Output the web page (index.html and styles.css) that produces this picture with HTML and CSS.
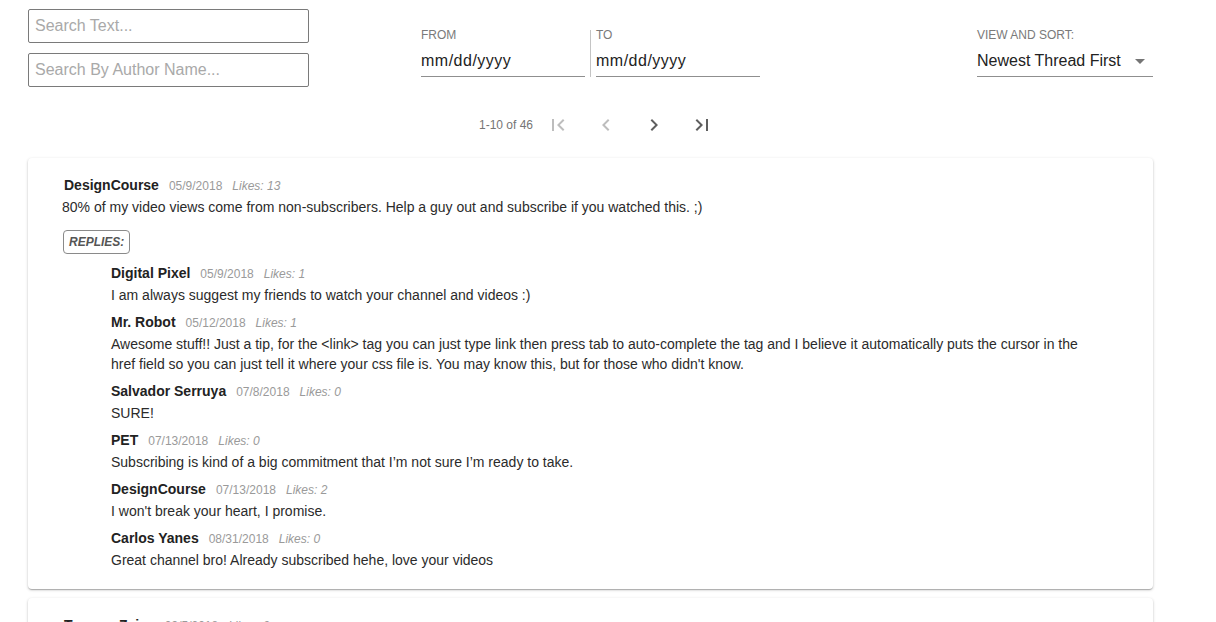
FILE: index.html
```html
<!DOCTYPE html>
<html>
<head>
<meta charset="utf-8">
<link rel="stylesheet" href="styles.css">
</head>
<body>
<div class="page">
  <div class="toolbar">
    <div class="search-col">
      <input class="search-input" type="text" placeholder="Search Text...">
      <input class="search-input" type="text" placeholder="Search By Author Name...">
    </div>
    <div class="dates">
      <div class="field">
        <div class="field-label">FROM</div>
        <div class="field-value date-value">mm/dd/yyyy</div>
      </div>
      <div class="divider"></div>
      <div class="field">
        <div class="field-label">TO</div>
        <div class="field-value date-value">mm/dd/yyyy</div>
      </div>
    </div>
    <div class="sort">
      <div class="field-label">VIEW AND SORT:</div>
      <div class="field-value select-value"><span>Newest Thread First</span><span class="caret"></span></div>
    </div>
  </div>

  <div class="pager">
    <span class="pager-range">1-10 of 46</span>
    <span class="pager-btn disabled"><svg viewBox="0 0 24 24" width="24" height="24"><path d="M18.41 16.59L13.82 12l4.59-4.59L17 6l-6 6 6 6zM6 6h2v12H6z"/></svg></span>
    <span class="pager-btn disabled"><svg viewBox="0 0 24 24" width="24" height="24"><path d="M15.41 7.41L14 6l-6 6 6 6 1.41-1.41L10.83 12z"/></svg></span>
    <span class="pager-btn"><svg viewBox="0 0 24 24" width="24" height="24"><path d="M10 6L8.59 7.41 13.17 12l-4.58 4.59L10 18l6-6z"/></svg></span>
    <span class="pager-btn"><svg viewBox="0 0 24 24" width="24" height="24"><path d="M5.59 7.41L10.18 12l-4.59 4.59L7 18l6-6-6-6zM16 6h2v12h-2z"/></svg></span>
  </div>

  <div class="card">
    <div class="comment">
      <div class="meta"><span class="author">DesignCourse</span><span class="date">05/9/2018</span><span class="likes">Likes: 13</span></div>
      <div class="text">80% of my video views come from non-subscribers. Help a guy out and subscribe if you watched this. ;)</div>
    </div>
    <div class="replies-btn">REPLIES:</div>
    <div class="replies">
      <div class="comment reply">
        <div class="meta"><span class="author">Digital Pixel</span><span class="date">05/9/2018</span><span class="likes">Likes: 1</span></div>
        <div class="text">I am always suggest my friends to watch your channel and videos :)</div>
      </div>
      <div class="comment reply">
        <div class="meta"><span class="author">Mr. Robot</span><span class="date">05/12/2018</span><span class="likes">Likes: 1</span></div>
        <div class="text">Awesome stuff!! Just a tip, for the &lt;link&gt; tag you can just type link then press tab to auto-complete the tag and I believe it automatically puts the cursor in the href field so you can just tell it where your css file is. You may know this, but for those who didn't know.</div>
      </div>
      <div class="comment reply">
        <div class="meta"><span class="author">Salvador Serruya</span><span class="date">07/8/2018</span><span class="likes">Likes: 0</span></div>
        <div class="text">SURE!</div>
      </div>
      <div class="comment reply">
        <div class="meta"><span class="author">PET</span><span class="date">07/13/2018</span><span class="likes">Likes: 0</span></div>
        <div class="text">Subscribing is kind of a big commitment that I’m not sure I’m ready to take.</div>
      </div>
      <div class="comment reply">
        <div class="meta"><span class="author">DesignCourse</span><span class="date">07/13/2018</span><span class="likes">Likes: 2</span></div>
        <div class="text">I won't break your heart, I promise.</div>
      </div>
      <div class="comment reply">
        <div class="meta"><span class="author">Carlos Yanes</span><span class="date">08/31/2018</span><span class="likes">Likes: 0</span></div>
        <div class="text">Great channel bro! Already subscribed hehe, love your videos</div>
      </div>
    </div>
  </div>

  <div class="card">
    <div class="comment">
      <div class="meta"><span class="author">Tomasz Zajac</span><span class="date">09/5/2018</span><span class="likes">Likes: 0</span></div>
      <div class="text">Thanks for the video!</div>
    </div>
  </div>
</div>
</body>
</html>
```

FILE: styles.css
```css
* { box-sizing: border-box; }

html, body {
  margin: 0;
  padding: 0;
  background: #ffffff;
  font-family: "Liberation Sans", Arial, sans-serif;
  color: #222;
  overflow: hidden;
}

.page {
  width: 1153px;
  padding-left: 28px;
}

.toolbar {
  display: flex;
  align-items: flex-start;
  padding-top: 9px;
}

.search-col {
  display: flex;
  flex-direction: column;
  gap: 10px;
  width: 281px;
}

.search-input {
  display: block;
  width: 281px;
  height: 34px;
  margin: 0;
  border: 1px solid #7a7a7a;
  border-radius: 2px;
  padding: 0 6px;
  font-family: "Liberation Sans", Arial, sans-serif;
  font-size: 16px;
  color: #222;
  outline: none;
}

.search-input::placeholder { color: #a9a9a9; }

.dates {
  display: flex;
  align-items: flex-start;
  margin-left: 112px;
  margin-top: 19px;
}

.field { width: 164px; }

.divider {
  width: 1px;
  height: 47px;
  background: #c4c4c4;
  margin: 2px 5px 0 5px;
}

.field-label {
  font-size: 12px;
  line-height: 14px;
  color: #7a7a7a;
  margin-bottom: 9px;
}

.field-value {
  font-size: 16px;
  line-height: 20px;
  color: #222;
  padding-bottom: 5px;
  border-bottom: 1px solid #8f8f8f;
}

.date-value { letter-spacing: 0.5px; }

.sort {
  margin-left: auto;
  margin-top: 19px;
  width: 176px;
}

.select-value {
  display: flex;
  align-items: center;
  justify-content: space-between;
  padding-right: 8px;
}

.caret {
  width: 0;
  height: 0;
  border-left: 5px solid transparent;
  border-right: 5px solid transparent;
  border-top: 5px solid #757575;
  margin-top: 1px;
}

.pager {
  display: flex;
  align-items: center;
  justify-content: center;
  height: 48px;
  margin-top: 14px;
  padding-left: 24px;
}

.pager-range {
  font-size: 12px;
  color: #757575;
  margin-right: 1px;
}

.pager-btn {
  width: 48px;
  height: 48px;
  display: flex;
  align-items: center;
  justify-content: center;
}

.pager-btn svg { fill: #5f5f5f; }
.pager-btn.disabled svg { fill: #bdbdbd; }

.card {
  background: #fff;
  border-radius: 4px;
  box-shadow: 0 1px 3px rgba(0,0,0,0.22), 0 1px 1px rgba(0,0,0,0.12), 0 2px 1px -1px rgba(0,0,0,0.1);
  padding: 17px 64px 12px 34px;
  margin-top: 9px;
  margin-bottom: 6px;
}

.comment { margin-bottom: 6.5px; }

.meta {
  display: flex;
  align-items: baseline;
  height: 20px;
  line-height: 20px;
  margin-bottom: 3px;
  padding-left: 2px;
}

.reply .meta { padding-left: 0; }

.author {
  font-size: 14px;
  font-weight: bold;
  color: #222;
  margin-right: 10px;
}

.date {
  font-size: 12px;
  color: #9a9a9a;
  margin-right: 10px;
}

.likes {
  font-size: 12px;
  font-style: italic;
  color: #9a9a9a;
}

.text {
  font-size: 14px;
  line-height: 19.5px;
  color: #2b2b2b;
}

.replies-btn {
  display: inline-block;
  margin-top: 6px;
  margin-left: 1px;
  height: 24px;
  line-height: 22px;
  padding: 0 5px;
  border: 1px solid #8a8a8a;
  border-radius: 4px;
  font-size: 12px;
  font-weight: bold;
  font-style: italic;
  color: #555;
}

.replies {
  margin-left: 49px;
  margin-top: 9px;
}
```
